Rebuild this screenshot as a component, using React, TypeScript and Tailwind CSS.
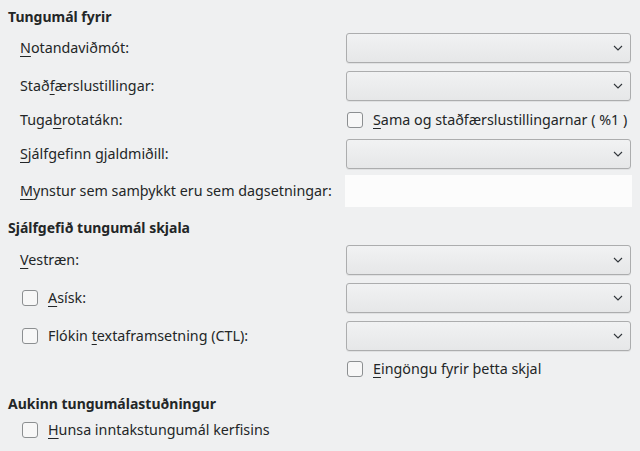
import React from 'react';

const font = { fontFamily: '"Noto Sans", "DejaVu Sans", sans-serif' };

function U({ children }: { children: React.ReactNode }) {
  return <span className="underline underline-offset-[3px] decoration-1">{children}</span>;
}

function Combo() {
  return (
    <div className="w-[285px] h-[30px] rounded-[3px] border border-[#acadae] bg-gradient-to-b from-[#f1f2f3] to-[#e6e7e8] shadow-[0_1px_0_rgba(0,0,0,0.06)] flex items-center justify-end pr-[6px]">
      <svg width="10" height="6" viewBox="0 0 10 6" className="mr-[1px]">
        <path d="M1 1 L5 5 L9 1" fill="none" stroke="#31363b" strokeWidth="1.1" />
      </svg>
    </div>
  );
}

function Box() {
  return <div className="w-[16px] h-[16px] rounded-[3px] border border-[#8c8f91] bg-[#f7f7f7] shrink-0" />;
}

function Row({ label, children, className = '' }: { label?: React.ReactNode; children?: React.ReactNode; className?: string }) {
  return (
    <div className={`flex items-center ${className}`}>
      <div className="w-[346px] shrink-0 flex items-center">{label}</div>
      <div className="flex items-center">{children}</div>
    </div>
  );
}

function Heading({ children, className = '' }: { children: React.ReactNode; className?: string }) {
  return <div className={`font-bold text-[14px] pl-[8px] h-[20px] leading-[20px] ${className}`}>{children}</div>;
}

export default function App() {
  return (
    <div className="w-[640px] h-[451px] bg-[#eff0f1] text-[#232627] text-[14.3px] overflow-hidden" style={font}>
      <Heading className="mt-[7px]">Tungumál fyrir</Heading>

      <Row className="h-[30px] mt-[6px]" label={<span className="pl-[20px]"><U>N</U>otandaviðmót:</span>}>
        <Combo />
      </Row>
      <Row className="h-[30px] mt-[8px]" label={<span className="pl-[20px]">Stað<U>f</U>ærslustillingar:</span>}>
        <Combo />
      </Row>
      <Row className="h-[30px] mt-[4px]" label={<span className="pl-[20px]">Tuga<U>b</U>rotatákn:</span>}>
        <div className="flex items-center gap-[10px] pl-[1px]">
          <Box />
          <span><U>S</U>ama og staðfærslustillingarnar ( %1 )</span>
        </div>
      </Row>
      <Row className="h-[30px] mt-[4px]" label={<span className="pl-[20px]"><U>S</U>jálfgefinn gjaldmiðill:</span>}>
        <Combo />
      </Row>
      <div className="flex items-center h-[32px] mt-[6px]">
        <div className="w-[345px] shrink-0"><span className="pl-[20px]"><U>M</U>ynstur sem samþykkt eru sem dagsetningar:</span></div>
        <div className="w-[287px] h-[32px] bg-[#fcfcfc]" />
      </div>

      <Heading className="mt-[11px]">Sjálfgefið tungumál skjala</Heading>

      <Row className="h-[30px] mt-[7px]" label={<span className="pl-[20px]"><U>V</U>estræn:</span>}>
        <Combo />
      </Row>
      <Row className="h-[30px] mt-[8px]" label={<div className="pl-[22px] flex items-center gap-[10px]"><Box /><span><U>A</U>sísk:</span></div>}>
        <Combo />
      </Row>
      <Row className="h-[30px] mt-[8px]" label={<div className="pl-[22px] flex items-center gap-[10px]"><Box /><span>Flókin <U>t</U>extaframsetning (CTL):</span></div>}>
        <Combo />
      </Row>
      <Row className="h-[22px] mt-[7px]">
        <div className="flex items-center gap-[10px] pl-[1px]">
          <Box />
          <span><U>E</U>ingöngu fyrir þetta skjal</span>
        </div>
      </Row>

      <Heading className="mt-[14px]">Aukinn tungumálastuðningur</Heading>
      <div className="flex items-center h-[22px] mt-[5px] pl-[22px] gap-[10px]">
        <Box />
        <span><U>H</U>unsa inntakstungumál kerfisins</span>
      </div>
    </div>
  );
}
